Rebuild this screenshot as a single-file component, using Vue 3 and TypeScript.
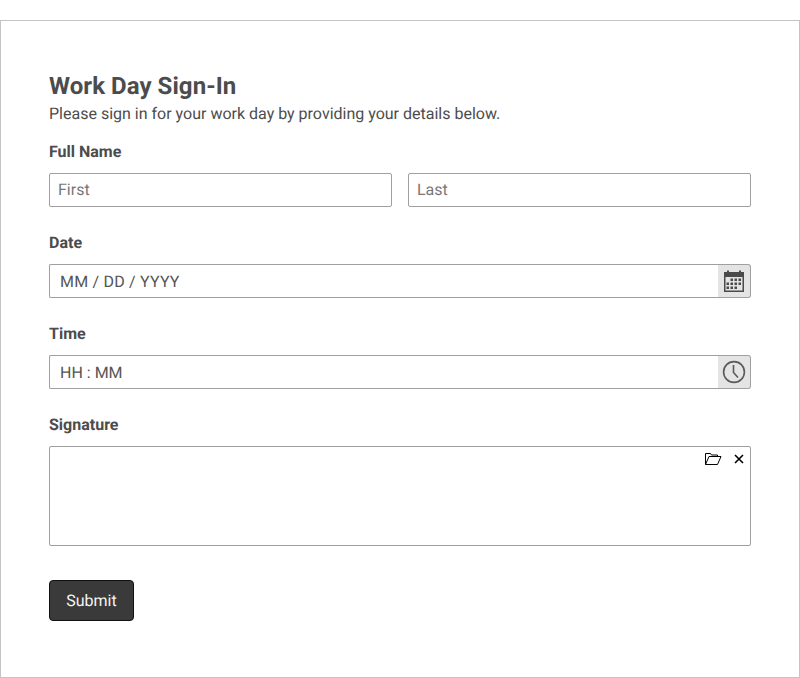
<script setup lang="ts">
</script>

<template>
  <main class="page">
    <form class="card" @submit.prevent>
      <h1 class="title">Work Day Sign-In</h1>
      <p class="lead">Please sign in for your work day by providing your details below.</p>

      <div class="field first-field">
        <div class="label">Full Name</div>
        <div class="names">
          <input class="input name" placeholder="First" />
          <input class="input name" placeholder="Last" />
        </div>
      </div>

      <div class="field">
        <div class="label">Date</div>
        <div class="group">
          <input class="input grouped date" placeholder="MM / DD / YYYY" />
          <span class="addon">
            <svg class="calendar" width="22" height="24" viewBox="0 0 22 24">
              <path d="M1 3h3V1.500h2V3h10V1.500h2V3h3v20H1z" fill="#4a4a4a" />
              <rect x="2.500" y="8" width="17" height="13.500" fill="#e4e4e4" />
              <g fill="#4a4a4a">
                <rect x="7.500" y="9.500" width="2.500" height="2.500" /><rect x="11.500" y="9.500" width="2.500" height="2.500" /><rect x="15.500" y="9.500" width="2.500" height="2.500" />
                <rect x="3.500" y="13.500" width="2.500" height="2.500" /><rect x="7.500" y="13.500" width="2.500" height="2.500" /><rect x="11.500" y="13.500" width="2.500" height="2.500" /><rect x="15.500" y="13.500" width="2.500" height="2.500" />
                <rect x="3.500" y="17.500" width="2.500" height="2.500" /><rect x="7.500" y="17.500" width="2.500" height="2.500" /><rect x="11.500" y="17.500" width="2.500" height="2.500" />
              </g>
            </svg>
          </span>
        </div>
      </div>

      <div class="field">
        <div class="label">Time</div>
        <div class="group">
          <input class="input grouped" placeholder="HH : MM" />
          <span class="addon">
            <svg width="24" height="24" viewBox="0 0 24 24" fill="none" stroke="#5a5a5a">
              <circle cx="12" cy="12" r="10.400" stroke-width="1.600" />
              <path d="M11.500 5v7.500l4.500 5" stroke-width="1.600" />
            </svg>
          </span>
        </div>
      </div>

      <div class="field">
        <div class="label">Signature</div>
        <div class="signature">
          <div class="tools">
            <svg width="18" height="14" viewBox="0 0 18 14" fill="none" stroke="#000" stroke-width="1">
              <path d="M1.500 12.500V1.500h5l1 1.500h6v1.500" />
              <path d="M1.500 12.500l3.500-8h12l-3.500 8z" />
            </svg>
            <svg width="10" height="10" viewBox="0 0 10 10" fill="none" stroke="#000" stroke-width="1.600">
              <path d="M1 1l8 8M9 1l-8 8" />
            </svg>
          </div>
        </div>
      </div>

      <button class="submit" type="submit">Submit</button>
    </form>
  </main>
</template>

<style>
html, body { margin: 0; background: #fff; }
</style>

<style scoped>
.page {
  padding-top: 20px;
  font-family: Roboto, "Liberation Sans", sans-serif;
  color: #4c4c4c;
  text-rendering: geometricPrecision;
}
.card {
  box-sizing: border-box;
  height: 658px;
  padding: 47px 48px 48px;
  border: 1px solid #c4c4c4;
  display: flex;
  flex-direction: column;
}
.title {
  margin: 0;
  font-size: 24px;
  line-height: 36px;
  font-weight: 700;
  letter-spacing: 0.06px;
}
.lead {
  margin: 0;
  font-size: 16px;
  line-height: 19px;
}
.field { margin-bottom: 26px; }
.first-field { margin-top: 19px; }
.label {
  font-size: 16px;
  line-height: 19px;
  font-weight: 700;
  margin-bottom: 12px;
}
.names { display: flex; gap: 16px; }
.input {
  box-sizing: border-box;
  height: 34px;
  border: 1px solid #a0a0a0;
  border-radius: 2px;
  font: 16px Roboto, "Liberation Sans", sans-serif;
  text-rendering: geometricPrecision;
  color: #4c4c4c;
  outline: none;
  background: #fff;
}
.input::placeholder { color: #777; opacity: 1; }
.name { flex: 1; min-width: 0; padding: 0 8px 2px; }
.group { display: flex; height: 34px; }
.grouped {
  flex: 1;
  min-width: 0;
  padding: 0 10px;
  border-right: 0;
  border-radius: 2px 0 0 2px;
}
.grouped::placeholder { color: #555; }
.date::placeholder { letter-spacing: 0.2px; }
.addon {
  box-sizing: border-box;
  width: 33px;
  background: #e4e4e4;
  border: 1px solid #a0a0a0;
  border-left: 0;
  border-radius: 0 3px 3px 0;
  display: flex;
  align-items: center;
  justify-content: center;
}
.calendar { margin-right: 1px; }
.signature {
  box-sizing: border-box;
  height: 100px;
  border: 1px solid #a0a0a0;
  border-radius: 2px;
  display: flex;
  justify-content: flex-end;
  align-items: flex-start;
}
.tools {
  display: flex;
  align-items: center;
  gap: 12px;
  padding: 5px 6px 0 0;
}
.submit {
  align-self: flex-start;
  margin-top: 8px;
  width: 85px;
  height: 41px;
  background: #3a3a3a;
  color: #f4f4f4;
  border: 1px solid #111;
  border-radius: 4px;
  font: 16px Roboto, "Liberation Sans", sans-serif;
  text-rendering: geometricPrecision;
  padding: 0;
}
</style>
